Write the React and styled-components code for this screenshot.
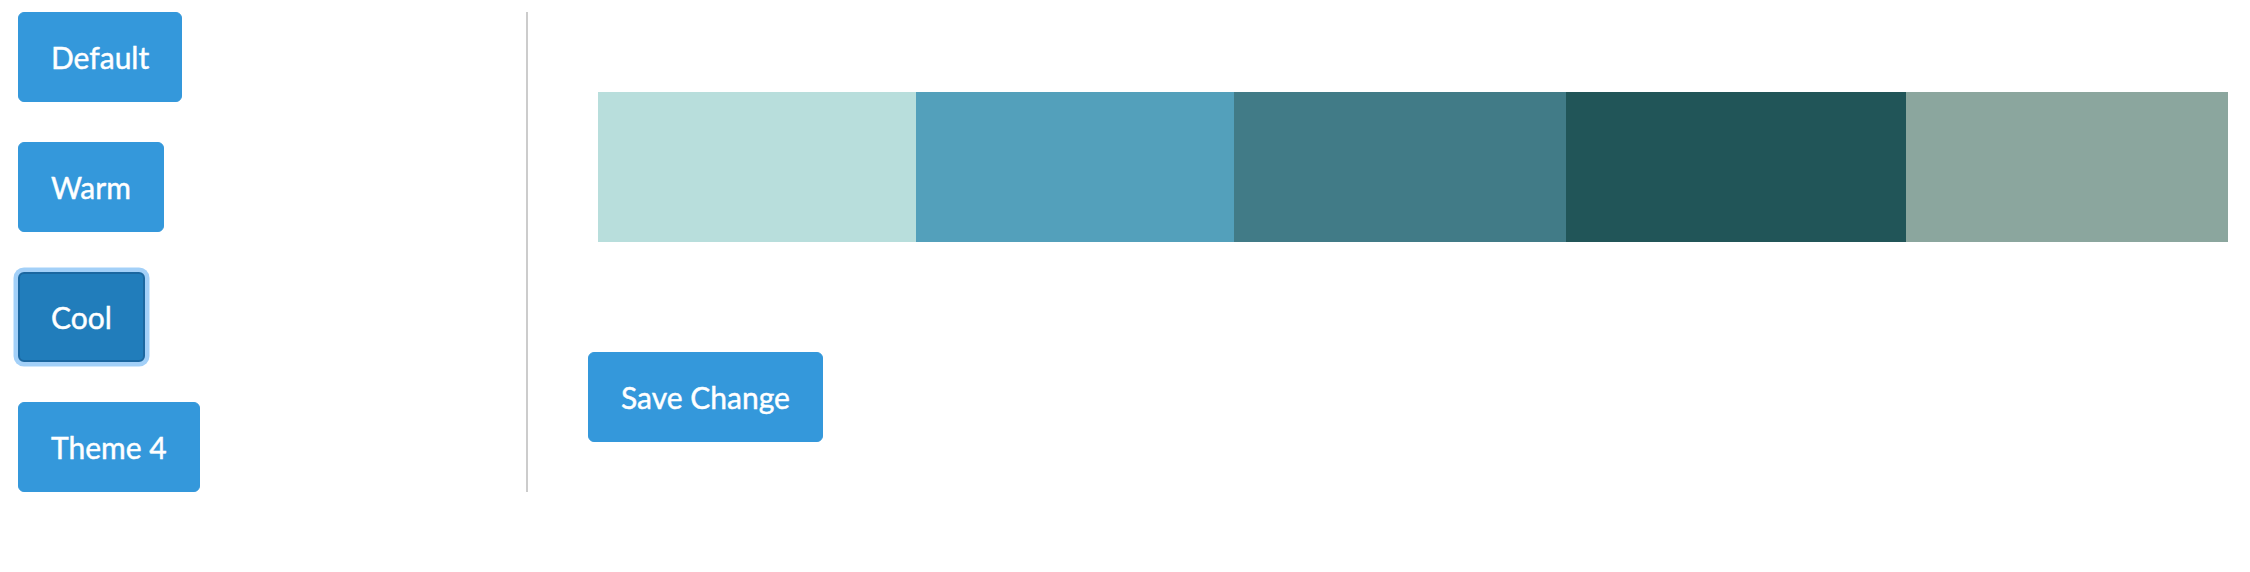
import React, { useState } from "react";
import styled, { createGlobalStyle, css } from "styled-components";

const Global = createGlobalStyle`
  html, body { margin: 0; padding: 0; background: #ffffff; }
  body { font-family: Lato, "Open Sans", "Liberation Sans", sans-serif; }
  * { box-sizing: border-box; }
`;

const Page = styled.div`
  display: flex;
  align-items: flex-start;
  padding: 12px 22px 0 18px;
`;

const Sidebar = styled.div`
  width: 510px;
  flex: none;
  display: flex;
  flex-direction: column;
  align-items: flex-start;
  gap: 40px;
  border-right: 2px solid #cccccc;
`;

const Btn = styled.button`
  font-family: Lato, "Open Sans", "Liberation Sans", sans-serif;
  font-size: 30px;
  line-height: 40px;
  font-weight: 400;
  -webkit-text-stroke: 0.45px #ffffff;
  color: #ffffff;
  background: #3498db;
  border: 1px solid #3498db;
  border-radius: 6px;
  padding: 24px 32px;
  cursor: pointer;
  white-space: nowrap;
  ${(p) =>
    p.$active &&
    css`
      background: #217dbb;
      border: 2px solid #1b67a0;
      padding: 23px 31px;
      box-shadow: 0 0 0 4.5px rgba(140, 196, 246, 0.8);
    `}
`;

const Main = styled.div`
  flex: 1;
  display: flex;
  flex-direction: column;
  align-items: flex-start;
  padding: 80px 0 0 60px;
`;

const Palette = styled.div`
  display: flex;
  align-self: stretch;
  height: 150px;
  margin: 0 0 110px 10px;
`;

const Swatch = styled.div`
  flex: ${(p) => p.$w} 1 0;
  background: ${(p) => p.$c};
`;

const themes = ["Default", "Warm", "Cool", "Theme 4"];
const swatches = [
  { c: "#b8dedc", w: 318 },
  { c: "#53a0bb", w: 318 },
  { c: "#417b87", w: 332 },
  { c: "#215558", w: 340 },
  { c: "#8ba69e", w: 322 },
];

export default function App() {
  const [active, setActive] = useState("Cool");
  return (
    <>
      <Global />
      <Page>
        <Sidebar>
          {themes.map((t) => (
            <Btn key={t} $active={t === active} onClick={() => setActive(t)}>
              {t}
            </Btn>
          ))}
        </Sidebar>
        <Main>
          <Palette>
            {swatches.map((s, i) => (
              <Swatch key={i} $c={s.c} $w={s.w} />
            ))}
          </Palette>
          <Btn>Save Change</Btn>
        </Main>
      </Page>
    </>
  );
}
